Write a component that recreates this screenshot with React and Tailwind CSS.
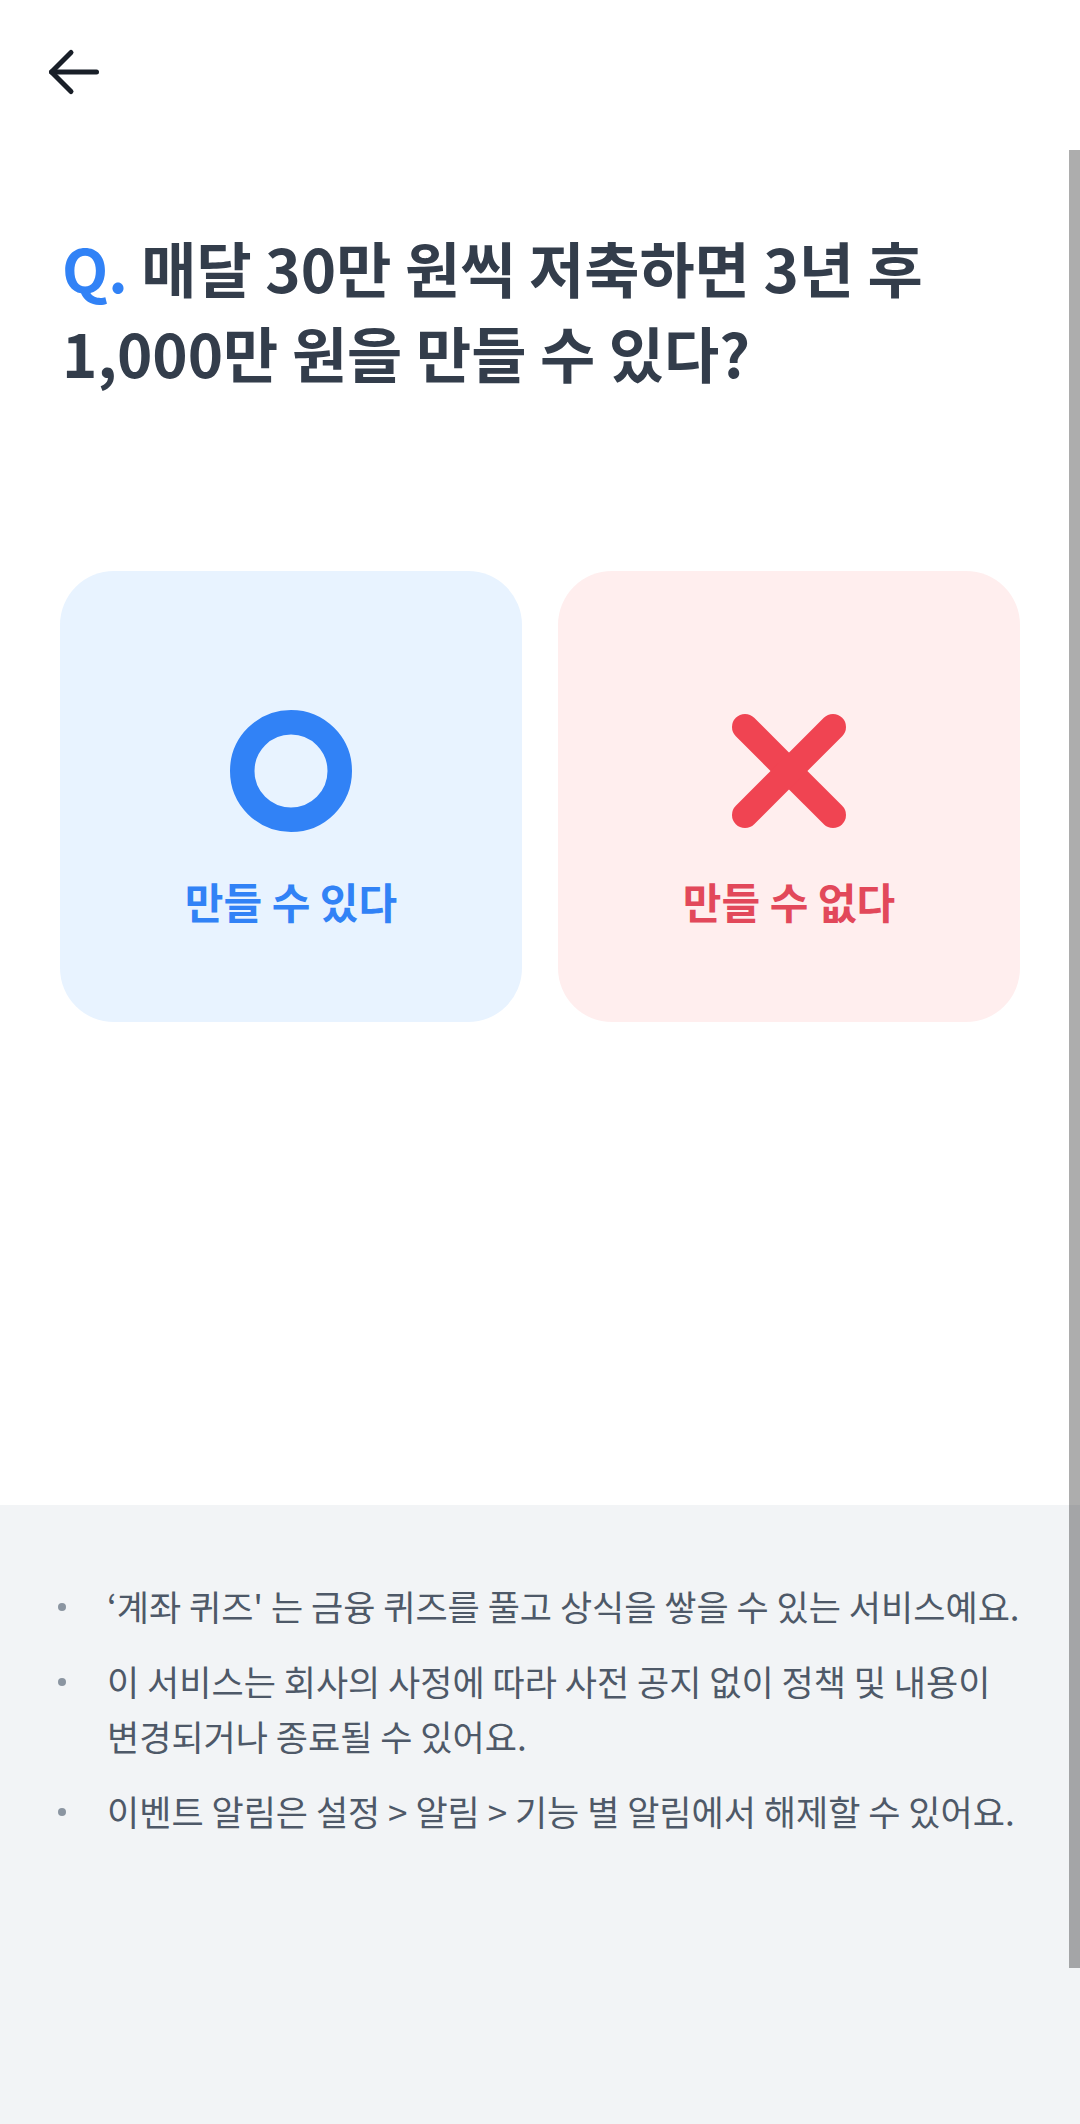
const notices = [
  '‘계좌 퀴즈\' 는 금융 퀴즈를 풀고 상식을 쌓을 수 있는 서비스예요.',
  '이 서비스는 회사의 사정에 따라 사전 공지 없이 정책 및 내용이 변경되거나 종료될 수 있어요.',
  '이벤트 알림은 설정 > 알림 > 기능 별 알림에서 해제할 수 있어요.',
];

function BackArrow() {
  return (
    <svg width="56" height="50" viewBox="0 0 56 50" fill="none" stroke="#191f28" strokeWidth="5" strokeLinecap="round" strokeLinejoin="round">
      <path d="M50.5 25H5.5" />
      <path d="M25 5.5L5.5 25L25 44.5" />
    </svg>
  );
}

function CircleMark() {
  return (
    <svg width="122" height="122" viewBox="0 0 122 122">
      <circle cx="61" cy="61" r="48.75" fill="none" stroke="#3182f6" strokeWidth="24.5" />
    </svg>
  );
}

function CrossMark() {
  return (
    <svg width="122" height="122" viewBox="0 0 122 122" fill="none" stroke="#f04452" strokeWidth="26" strokeLinecap="round">
      <path d="M17 17L105 105" />
      <path d="M105 17L17 105" />
    </svg>
  );
}

function AnswerCard({ bg, color, icon, label }) {
  return (
    <button className={`flex h-[451px] flex-col items-center rounded-[54px] pt-[139px] ${bg}`}>
      {icon}
      <span className={`mt-[44px] text-[42px] font-bold leading-[50px] ${color}`}>{label}</span>
    </button>
  );
}

export default function App() {
  return (
    <div className="relative flex min-h-screen flex-col bg-white font-['Noto_Sans_CJK_KR',sans-serif] break-keep">
      {/* header */}
      <div className="h-[146px] pl-[46px] pt-[47px]">
        <BackArrow />
      </div>

      {/* question */}
      <h1 className="pl-[62px] pr-[30px] pt-[78px] text-[60px] font-bold leading-[85px] text-[#333d4b]">
        <span className="text-[#3182f6]">Q.</span> 매달 30만 원씩 저축하면 3년 후
        <br />
        1,000만 원을 만들 수 있다?
      </h1>

      {/* answers */}
      <div className="mt-[177px] grid grid-cols-2 gap-[36px] px-[60px]">
        <AnswerCard bg="bg-[#e8f3ff]" color="text-[#3182f6]" icon={<CircleMark />} label="만들 수 있다" />
        <AnswerCard bg="bg-[#ffeeee]" color="text-[#e2485a]" icon={<CrossMark />} label="만들 수 없다" />
      </div>

      {/* notices */}
      <div className="mt-[483px] flex-1 bg-[#f2f4f6] pl-[58px] pr-[44px] pt-[73px] pb-[60px]">
        <ul className="flex flex-col gap-[20px]">
          {notices.map((t) => (
            <li key={t} className="flex text-[35px] leading-[55px] text-[#4e5968]">
              <span className="flex h-[55px] w-[49px] shrink-0 items-center pt-[3px]">
                <span className="h-[8px] w-[8px] rounded-full bg-[#8b95a1]" />
              </span>
              <span>{t}</span>
            </li>
          ))}
        </ul>
      </div>

      {/* scrollbar thumb */}
      <div className="absolute right-0 top-[150px] h-[1818px] w-[11px] bg-[rgba(0,0,0,0.32)]" />
    </div>
  );
}
